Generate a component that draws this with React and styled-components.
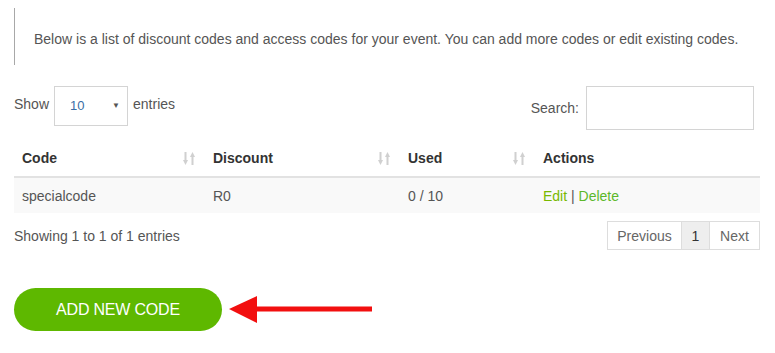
import React from 'react';
import styled, { createGlobalStyle } from 'styled-components';

const GlobalStyle = createGlobalStyle`
  body {
    margin: 0;
    background: #fff;
    font-family: "Liberation Sans", Arial, sans-serif;
    font-size: 14px;
    color: #555;
  }
`;

const rows = [{ code: 'specialcode', discount: 'R0', used: '0 / 10' }];

const columns = [
  { label: 'Code', width: 191, sortable: true },
  { label: 'Discount', width: 195, sortable: true },
  { label: 'Used', width: 135, sortable: true },
  { label: 'Actions', sortable: false },
];

const SortIcon = () => (
  <svg width="12" height="13" viewBox="0 0 12 13" fill="#d0d0d0">
    <rect x="1.5" y="0" width="2" height="9" />
    <polygon points="0,8 5,8 2.5,13" />
    <rect x="8.5" y="4" width="2" height="9" />
    <polygon points="7,5 12,5 9.5,0" />
  </svg>
);

const Arrow = () => (
  <svg width="146" height="30" viewBox="0 0 146 30">
    <polygon points="0,14 28,1 28,28" fill="#f20f0f" />
    <rect x="26" y="11.5" width="117" height="5" fill="#f20f0f" />
  </svg>
);

const App = () => {
  return (
    <>
      <GlobalStyle />
      <Page>
        <Quote>
          Below is a list of discount codes and access codes for your event. You can add more codes or edit existing codes.
        </Quote>

        <Controls>
          <LengthControl>
            <span>Show</span>
            <SelectBox>
              <span>10</span>
              <Caret>▼</Caret>
            </SelectBox>
            <span>entries</span>
          </LengthControl>
          <SearchControl>
            <span>Search:</span>
            <SearchInput />
          </SearchControl>
        </Controls>

        <Table>
          <thead>
            <tr>
              {columns.map((col) => (
                <HeadCell key={col.label} $width={col.width}>
                  <HeadInner>
                    <span>{col.label}</span>
                    {col.sortable && <SortIcon />}
                  </HeadInner>
                </HeadCell>
              ))}
            </tr>
          </thead>
          <tbody>
            {rows.map((row) => (
              <BodyRow key={row.code}>
                <Cell>{row.code}</Cell>
                <Cell>{row.discount}</Cell>
                <Cell>{row.used}</Cell>
                <Cell>
                  <ActionLink $tone="#78b800">Edit</ActionLink>
                  <Divider> | </Divider>
                  <ActionLink $tone="#5cb82a">Delete</ActionLink>
                </Cell>
              </BodyRow>
            ))}
          </tbody>
        </Table>

        <Footer>
          <span>Showing 1 to 1 of 1 entries</span>
          <Pager>
            <PageButton $width={75}>Previous</PageButton>
            <PageButton $width={29} $active>1</PageButton>
            <PageButton $width={51}>Next</PageButton>
          </Pager>
        </Footer>

        <CallToAction>
          <AddButton>ADD NEW CODE</AddButton>
          <Arrow />
        </CallToAction>
      </Page>
    </>
  );
};

export default App;

const Page = styled.div`
  padding: 8px 15px 0 14px;
`;

const Quote = styled.div`
  border-left: 1px solid #a8a8a8;
  height: 57px;
  box-sizing: border-box;
  padding: 23px 0 0 19px;
  line-height: 16px;
  color: #555;
`;

const Controls = styled.div`
  display: flex;
  justify-content: space-between;
  align-items: flex-start;
  margin-top: 21px;
`;

const LengthControl = styled.div`
  display: flex;
  align-items: flex-start;
  gap: 5px;
  line-height: 16px;

  & > span {
    padding-top: 10px;
  }
`;

const SelectBox = styled.div`
  width: 74px;
  height: 40px;
  box-sizing: border-box;
  border: 1px solid #d4d4d4;
  display: flex;
  align-items: center;
  justify-content: space-between;
  padding: 0 7px 0 15px;
  font-size: 13px;
  color: #3a6ea5;
`;

const Caret = styled.span`
  font-size: 8px;
  color: #555;
`;

const SearchControl = styled.div`
  display: flex;
  align-items: center;
  gap: 7px;
  margin-right: 6px;
`;

const SearchInput = styled.div`
  width: 168px;
  height: 44px;
  box-sizing: border-box;
  border: 1px solid #d4d4d4;
`;

const Table = styled.table`
  width: 100%;
  border-collapse: collapse;
  margin-top: 10px;
  color: #555;
`;

const HeadCell = styled.th`
  width: ${(p) => (p.$width ? `${p.$width}px` : 'auto')};
  height: 37px;
  box-sizing: border-box;
  padding: 0 8px;
  text-align: left;
  font-weight: bold;
  color: #333;
  border-bottom: 2px solid #e2e2e2;
`;

const HeadInner = styled.div`
  display: flex;
  align-items: center;
  justify-content: space-between;

  svg {
    margin-right: 2px;
  }
`;

const BodyRow = styled.tr`
  background: #f9f9f9;
`;

const Cell = styled.td`
  height: 35px;
  padding: 0 8px;
`;

const ActionLink = styled.a`
  color: ${(p) => p.$tone};
  cursor: pointer;
`;

const Divider = styled.span`
  color: #555;
`;

const Footer = styled.div`
  display: flex;
  justify-content: space-between;
  align-items: center;
  margin-top: 8px;
`;

const Pager = styled.div`
  display: flex;
`;

const PageButton = styled.div`
  width: ${(p) => p.$width}px;
  height: 29px;
  box-sizing: border-box;
  display: flex;
  align-items: center;
  justify-content: center;
  border: 1px solid #ddd;
  margin-left: -1px;
  background: ${(p) => (p.$active ? '#eeeeee' : '#fff')};
  color: ${(p) => (p.$active ? '#333' : '#666')};
`;

const CallToAction = styled.div`
  display: flex;
  align-items: center;
  gap: 7px;
  margin-top: 38px;
`;

const AddButton = styled.button`
  width: 208px;
  height: 43px;
  border: none;
  border-radius: 22px;
  background: #5eb800;
  color: #fff;
  font-family: "Liberation Sans", Arial, sans-serif;
  font-size: 16px;
  letter-spacing: -0.2px;
  padding: 0;
  cursor: pointer;
`;
